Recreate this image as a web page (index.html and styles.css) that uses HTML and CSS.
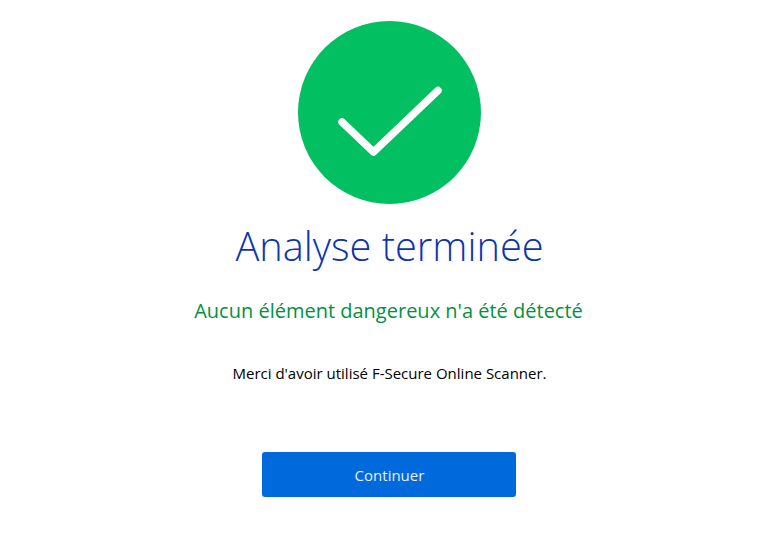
FILE: index.html
```html
<!DOCTYPE html>
<html lang="fr">
<head>
  <meta charset="UTF-8">
  <title>Analyse terminée</title>
  <link rel="stylesheet" href="styles.css">
</head>
<body>

<div class="result">
  <svg class="result-icon" width="183" height="183" viewBox="0 0 183 183">
    <circle cx="91.5" cy="91.5" r="91.5" fill="#02c061"/>
    <path d="M44 101 L75.5 131 L140 69.5" fill="none" stroke="#fff" stroke-width="7.5" stroke-linecap="round" stroke-linejoin="round"/>
  </svg>
  <h1>Analyse terminée</h1>
  <h2>Aucun élément dangereux n'a été détecté</h2>
  <p>Merci d'avoir utilisé F-Secure Online Scanner.</p>
  <button>Continuer</button>
</div>

</body>
</html>
```

FILE: styles.css
```css
body {
  font-family: "Open Sans", "Noto Sans", sans-serif;
  margin: 0;
  background-color: #fff;
}
.result {
  display: flex;
  flex-direction: column;
  align-items: center;
  padding: 21px 0 0 18px;
}
.result-icon {
  display: block;
}
h1 {
  margin: 10px 0 0;
  font-size: 39.75px;
  line-height: 64px;
  font-weight: 300;
  color: #0c35ad;
}
h2 {
  margin: 20px 2px 0 0;
  font-size: 20px;
  line-height: 26px;
  font-weight: 400;
  color: #03913f;
}
p {
  margin: 38px 0 0;
  font-size: 15px;
  line-height: 22px;
  color: #000;
}
button {
  margin: 68px 2px 0 0;
  padding: 0 0 0 2px;
  width: 254px;
  height: 45px;
  border: none;
  border-radius: 3px;
  background-color: #0069dc;
  color: #e6f0fc;
  font-family: inherit;
  font-size: 15px;
  cursor: pointer;
}
```
